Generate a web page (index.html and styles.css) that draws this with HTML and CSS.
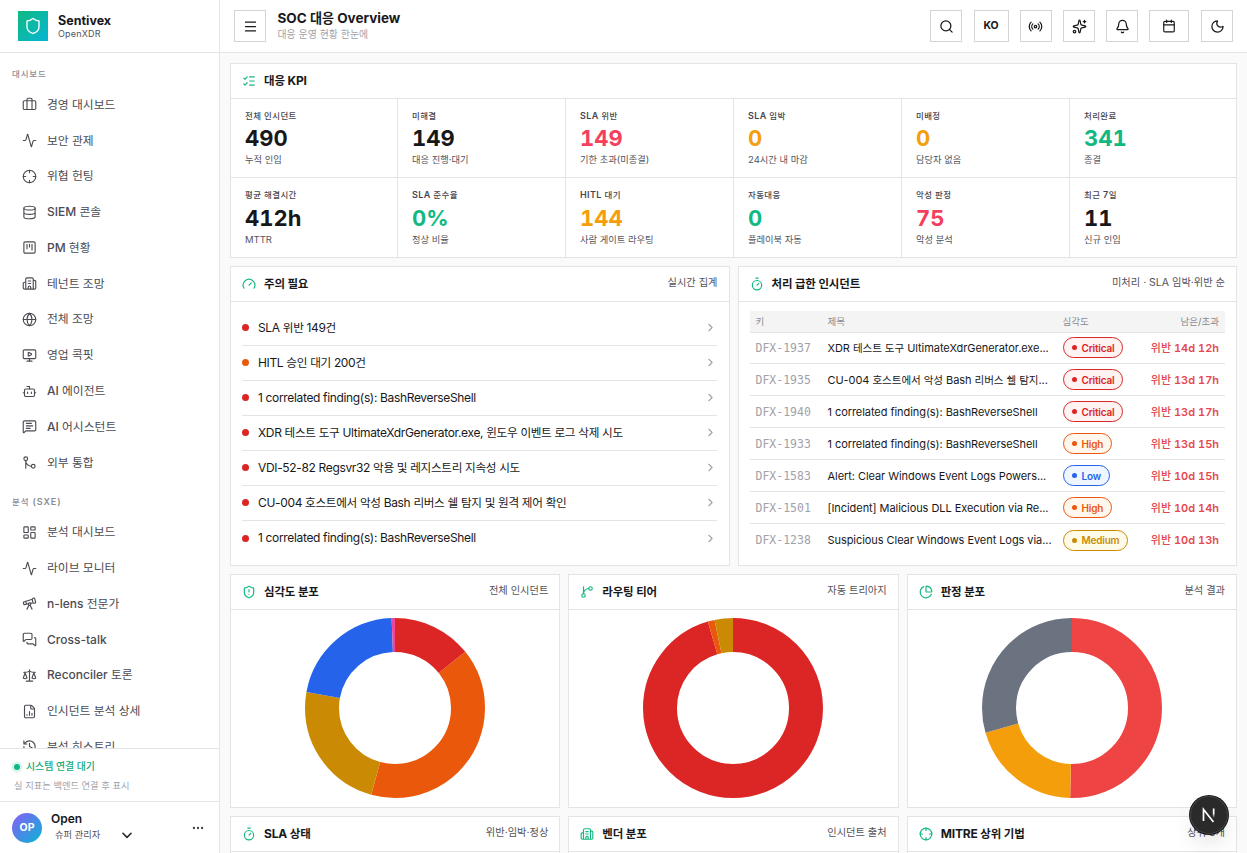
FILE: index.html
```html
<!DOCTYPE html>
<html lang="ko">
<head>
<meta charset="utf-8">
<title>SOC 대응 Overview</title>
<link rel="stylesheet" href="styles.css">
</head>
<body>
<svg class="defs" aria-hidden="true">
  <symbol id="shield" viewBox="0 0 24 24"><path d="M20 13c0 5-3.5 7.5-7.66 8.95a1 1 0 0 1-.67-.01C7.5 20.5 4 18 4 13V6a1 1 0 0 1 1-1c2 0 4.500-1.200 6.240-2.720a1.170 1.170 0 0 1 1.520 0C14.510 3.810 17 5 19 5a1 1 0 0 1 1 1z"/></symbol>
  <symbol id="shield-alert" viewBox="0 0 24 24"><path d="M20 13c0 5-3.5 7.5-7.66 8.950a1 1 0 0 1-.67-.01C7.5 20.5 4 18 4 13V6a1 1 0 0 1 1-1c2 0 4.500-1.200 6.240-2.720a1.170 1.170 0 0 1 1.520 0C14.510 3.810 17 5 19 5a1 1 0 0 1 1 1zM12 8v4M12 16h.01"/></symbol>
  <symbol id="briefcase" viewBox="0 0 24 24"><rect x="2" y="6" width="20" height="14" rx="2"/><path d="M16 20V4a2 2 0 0 0-2-2h-4a2 2 0 0 0-2 2v16"/></symbol>
  <symbol id="activity" viewBox="0 0 24 24"><path d="M22 12h-2.480a2 2 0 0 0-1.930 1.460l-2.350 8.360a.25.25 0 0 1-.48 0L9.240 2.180a.25.25 0 0 0-.48 0l-2.350 8.360A2 2 0 0 1 4.490 12H2"/></symbol>
  <symbol id="crosshair" viewBox="0 0 24 24"><circle cx="12" cy="12" r="10"/><path d="M22 12h-4M6 12H2M12 6V2M12 22v-4"/></symbol>
  <symbol id="database" viewBox="0 0 24 24"><ellipse cx="12" cy="5" rx="9" ry="3"/><path d="M3 5v14a9 3 0 0 0 18 0V5M3 12a9 3 0 0 0 18 0"/></symbol>
  <symbol id="kanban" viewBox="0 0 24 24"><rect x="3" y="3" width="18" height="18" rx="2"/><path d="M8 7v7M12 7v4M16 7v9"/></symbol>
  <symbol id="building" viewBox="0 0 24 24"><path d="M10 12h4M10 8h4M14 21v-3a2 2 0 0 0-4 0v3M6 10H4a2 2 0 0 0-2 2v7a2 2 0 0 0 2 2h16a2 2 0 0 0 2-2V9a2 2 0 0 0-2-2h-2M6 21V5a2 2 0 0 1 2-2h8a2 2 0 0 1 2 2v16"/></symbol>
  <symbol id="globe" viewBox="0 0 24 24"><circle cx="12" cy="12" r="10"/><path d="M12 2a14.500 14.500 0 0 0 0 20 14.500 14.500 0 0 0 0-20M2 12h20"/></symbol>
  <symbol id="monitor" viewBox="0 0 24 24"><path d="M10 7.750a.75.75 0 0 1 1.140-.64l3.670 2.250a.75.75 0 0 1 0 1.280l-3.670 2.250a.75.75 0 0 1-1.140-.64zM12 17v4M8 21h8"/><rect x="2" y="3" width="20" height="14" rx="2"/></symbol>
  <symbol id="bot" viewBox="0 0 24 24"><path d="M12 8V4H8M2 14h2M20 14h2M15 13v2M9 13v2"/><rect x="4" y="8" width="16" height="12" rx="2"/></symbol>
  <symbol id="message" viewBox="0 0 24 24"><path d="M22 17a2 2 0 0 1-2 2H6.828a2 2 0 0 0-1.414.586l-2.202 2.202A.71.71 0 0 1 2 21.286V5a2 2 0 0 1 2-2h16a2 2 0 0 1 2 2zM7 11h10M7 15h6M7 7h8"/></symbol>
  <symbol id="merge" viewBox="0 0 24 24"><circle cx="18" cy="18" r="3"/><circle cx="6" cy="6" r="3"/><path d="M6 21V9a9 9 0 0 0 9 9"/></symbol>
  <symbol id="branch" viewBox="0 0 24 24"><path d="M15 6a9 9 0 0 0-9 9V3"/><circle cx="18" cy="6" r="3"/><circle cx="6" cy="18" r="3"/></symbol>
  <symbol id="dashboard" viewBox="0 0 24 24"><rect x="3" y="3" width="7" height="9" rx="1"/><rect x="14" y="3" width="7" height="5" rx="1"/><rect x="14" y="12" width="7" height="9" rx="1"/><rect x="3" y="16" width="7" height="5" rx="1"/></symbol>
  <symbol id="telescope" viewBox="0 0 24 24"><path d="m10.065 12.493-6.180 1.318a.934.934 0 0 1-1.108-.702l-.537-2.150a1.070 1.070 0 0 1 .691-1.265l13.504-4.440M13.560 11.747l4.332-.924M16 21l-3.105-6.210M16.485 5.940a2 2 0 0 1 1.455-2.425l1.090-.272a1 1 0 0 1 1.212.727l1.515 6.060a1 1 0 0 1-.727 1.213l-1.090.272a2 2 0 0 1-2.425-1.455zM6.158 8.633l1.114 4.456M8 21l3.105-6.210"/><circle cx="12" cy="13" r="2"/></symbol>
  <symbol id="messages" viewBox="0 0 24 24"><path d="M16 10a2 2 0 0 1-2 2H6.828a2 2 0 0 0-1.414.586l-2.202 2.202A.71.71 0 0 1 2 14.286V4a2 2 0 0 1 2-2h10a2 2 0 0 1 2 2zM20 9a2 2 0 0 1 2 2v10.286a.71.71 0 0 1-1.212.502l-2.202-2.202A2 2 0 0 0 17.172 19H10a2 2 0 0 1-2-2v-1"/></symbol>
  <symbol id="scale" viewBox="0 0 24 24"><path d="M12 3v18M19 8l3 8a5 5 0 0 1-6 0zV7M3 7h1a17 17 0 0 0 8-2 17 17 0 0 0 8 2h1M5 8l3 8a5 5 0 0 1-6 0zV7M7 21h10"/></symbol>
  <symbol id="file-chart" viewBox="0 0 24 24"><path d="M6 22a2 2 0 0 1-2-2V4a2 2 0 0 1 2-2h8a2.400 2.400 0 0 1 1.704.706l3.588 3.588A2.400 2.400 0 0 1 20 8v12a2 2 0 0 1-2 2zM14 2v5a1 1 0 0 0 1 1h5M8 18v-1M12 18v-6M16 18v-3"/></symbol>
  <symbol id="history" viewBox="0 0 24 24"><path d="M3 12a9 9 0 1 0 9-9 9.750 9.750 0 0 0-6.740 2.740L3 8M3 3v5h5M12 7v5l4 2"/></symbol>
  <symbol id="checks" viewBox="0 0 24 24"><path d="M13 5h8M13 12h8M13 19h8M3 17l2 2 4-4M3 7l2 2 4-4"/></symbol>
  <symbol id="gauge" viewBox="0 0 24 24"><path d="m12 14 4-4M3.340 19a10 10 0 1 1 17.320 0"/></symbol>
  <symbol id="timer" viewBox="0 0 24 24"><path d="M10 2h4M12 14l3-3"/><circle cx="12" cy="14" r="8"/></symbol>
  <symbol id="pie" viewBox="0 0 24 24"><path d="M21 12c.552 0 1.005-.449.950-.998a10 10 0 0 0-8.953-8.951c-.55-.055-.998.398-.998.950v8a1 1 0 0 0 1 1zM21.210 15.890A10 10 0 1 1 8 2.830"/></symbol>
  <symbol id="menu" viewBox="0 0 24 24"><path d="M4 5h16M4 12h16M4 19h16"/></symbol>
  <symbol id="search" viewBox="0 0 24 24"><path d="m21 21-4.340-4.340"/><circle cx="11" cy="11" r="8"/></symbol>
  <symbol id="radio" viewBox="0 0 24 24"><path d="M16.247 7.761a6 6 0 0 1 0 8.478M19.075 4.933a10 10 0 0 1 0 14.134M4.925 19.067a10 10 0 0 1 0-14.134M7.753 16.239a6 6 0 0 1 0-8.478"/><circle cx="12" cy="12" r="2"/></symbol>
  <symbol id="sparkles" viewBox="0 0 24 24"><path d="M11.017 2.814a1 1 0 0 1 1.966 0l1.051 5.558a2 2 0 0 0 1.594 1.594l5.558 1.051a1 1 0 0 1 0 1.966l-5.558 1.051a2 2 0 0 0-1.594 1.594l-1.051 5.558a1 1 0 0 1-1.966 0l-1.051-5.558a2 2 0 0 0-1.594-1.594l-5.558-1.051a1 1 0 0 1 0-1.966l5.558-1.051a2 2 0 0 0 1.594-1.594zM20 2v4M22 4h-4"/><circle cx="4" cy="20" r="2"/></symbol>
  <symbol id="bell" viewBox="0 0 24 24"><path d="M10.268 21a2 2 0 0 0 3.464 0M3.262 15.326A1 1 0 0 0 4 17h16a1 1 0 0 0 .74-1.673C19.410 13.956 18 12.499 18 8A6 6 0 0 0 6 8c0 4.499-1.411 5.956-2.738 7.326"/></symbol>
  <symbol id="calendar" viewBox="0 0 24 24"><path d="M8 2v4M16 2v4M3 10h18"/><rect x="3" y="4" width="18" height="18" rx="2"/></symbol>
  <symbol id="moon" viewBox="0 0 24 24"><path d="M20.985 12.486a9 9 0 1 1-9.473-9.472c.405-.022.617.460.402.803a6 6 0 0 0 8.268 8.268c.344-.215.825-.004.803.401"/></symbol>
  <symbol id="chev-right" viewBox="0 0 24 24"><path d="m9 18 6-6-6-6"/></symbol>
  <symbol id="chev-down" viewBox="0 0 24 24"><path d="m5 9 7 7 7-7"/></symbol>
  <symbol id="dots" viewBox="0 0 24 24"><circle cx="5" cy="12" r="1"/><circle cx="12" cy="12" r="1"/><circle cx="19" cy="12" r="1"/></symbol>
</svg>

<div class="app">
  <aside class="sidebar">
    <div class="brand">
      <div class="logo"><svg class="icon"><use href="#shield"/></svg></div>
      <div><div class="brand-name">Sentivex</div><div class="brand-sub">OpenXDR</div></div>
    </div>
    <nav class="nav">
      <div class="nav-label">대시보드</div>
      <a class="nav-item"><svg class="icon"><use href="#briefcase"/></svg><span>경영 대시보드</span></a>
      <a class="nav-item"><svg class="icon"><use href="#activity"/></svg><span>보안 관제</span></a>
      <a class="nav-item"><svg class="icon"><use href="#crosshair"/></svg><span>위협 헌팅</span></a>
      <a class="nav-item"><svg class="icon"><use href="#database"/></svg><span>SIEM 콘솔</span></a>
      <a class="nav-item"><svg class="icon"><use href="#kanban"/></svg><span>PM 현황</span></a>
      <a class="nav-item"><svg class="icon"><use href="#building"/></svg><span>테넌트 조망</span></a>
      <a class="nav-item"><svg class="icon"><use href="#globe"/></svg><span>전체 조망</span></a>
      <a class="nav-item"><svg class="icon"><use href="#monitor"/></svg><span>영업 콕핏</span></a>
      <a class="nav-item"><svg class="icon"><use href="#bot"/></svg><span>AI 에이전트</span></a>
      <a class="nav-item"><svg class="icon"><use href="#message"/></svg><span>AI 어시스턴트</span></a>
      <a class="nav-item"><svg class="icon"><use href="#merge"/></svg><span>외부 통합</span></a>
      <div class="nav-label second">분석 (SXE)</div>
      <a class="nav-item"><svg class="icon"><use href="#dashboard"/></svg><span>분석 대시보드</span></a>
      <a class="nav-item"><svg class="icon"><use href="#activity"/></svg><span>라이브 모니터</span></a>
      <a class="nav-item"><svg class="icon"><use href="#telescope"/></svg><span>n-lens 전문가</span></a>
      <a class="nav-item"><svg class="icon"><use href="#messages"/></svg><span>Cross-talk</span></a>
      <a class="nav-item"><svg class="icon"><use href="#scale"/></svg><span>Reconciler 토론</span></a>
      <a class="nav-item"><svg class="icon"><use href="#file-chart"/></svg><span>인시던트 분석 상세</span></a>
      <a class="nav-item"><svg class="icon"><use href="#history"/></svg><span>분석 히스토리</span></a>
    </nav>
    <div class="status">
      <div class="status-line"><i class="status-dot"></i><span>시스템 연결 대기</span></div>
      <div class="status-sub">실 지표는 백엔드 연결 후 표시</div>
    </div>
    <div class="user">
      <div class="avatar">OP</div>
      <div class="user-text">
        <div class="user-name">Open</div>
        <div class="user-role"><span>슈퍼 관리자</span><svg class="icon"><use href="#chev-down"/></svg></div>
      </div>
      <svg class="icon more"><use href="#dots"/></svg>
    </div>
  </aside>

  <div class="main">
    <header class="topbar">
      <button class="btn menu-btn"><svg class="icon"><use href="#menu"/></svg></button>
      <div class="titles"><div class="title">SOC 대응 Overview</div><div class="subtitle">대응 운영 현황 한눈에</div></div>
      <div class="actions">
        <button class="btn"><svg class="icon"><use href="#search"/></svg></button>
        <button class="btn lang">KO</button>
        <button class="btn"><svg class="icon"><use href="#radio"/></svg></button>
        <button class="btn"><svg class="icon"><use href="#sparkles"/></svg></button>
        <button class="btn"><svg class="icon"><use href="#bell"/></svg></button>
        <button class="btn wide"><svg class="icon small"><use href="#calendar"/></svg></button>
        <button class="btn"><svg class="icon"><use href="#moon"/></svg></button>
      </div>
    </header>

    <main class="content">
      <section class="card">
        <div class="card-head"><svg class="icon"><use href="#checks"/></svg><h2>대응 KPI</h2></div>
        <div class="kpis">
          <div class="kpi"><div class="k-label">전체 인시던트</div><div class="k-value">490</div><div class="k-sub">누적 인입</div></div>
          <div class="kpi"><div class="k-label">미해결</div><div class="k-value">149</div><div class="k-sub">대응 진행·대기</div></div>
          <div class="kpi"><div class="k-label">SLA 위반</div><div class="k-value rose">149</div><div class="k-sub">기한 초과(미종결)</div></div>
          <div class="kpi"><div class="k-label">SLA 임박</div><div class="k-value amber">0</div><div class="k-sub">24시간 내 마감</div></div>
          <div class="kpi"><div class="k-label">미배정</div><div class="k-value amber">0</div><div class="k-sub">담당자 없음</div></div>
          <div class="kpi"><div class="k-label">처리완료</div><div class="k-value green">341</div><div class="k-sub">종결</div></div>
          <div class="kpi"><div class="k-label">평균 해결시간</div><div class="k-value">412h</div><div class="k-sub">MTTR</div></div>
          <div class="kpi"><div class="k-label">SLA 준수율</div><div class="k-value green">0%</div><div class="k-sub">정상 비율</div></div>
          <div class="kpi"><div class="k-label">HITL 대기</div><div class="k-value amber">144</div><div class="k-sub">사람 게이트 라우팅</div></div>
          <div class="kpi"><div class="k-label">자동대응</div><div class="k-value green">0</div><div class="k-sub">플레이북 자동</div></div>
          <div class="kpi"><div class="k-label">악성 판정</div><div class="k-value rose">75</div><div class="k-sub">악성 분석</div></div>
          <div class="kpi"><div class="k-label">최근 7일</div><div class="k-value">11</div><div class="k-sub">신규 인입</div></div>
        </div>
      </section>

      <div class="two">
        <section class="card">
          <div class="card-head"><svg class="icon"><use href="#gauge"/></svg><h2>주의 필요</h2><span class="note">실시간 집계</span></div>
          <div class="alerts">
            <div class="alert"><i class="dot"></i><span>SLA 위반 149건</span><svg class="icon"><use href="#chev-right"/></svg></div>
            <div class="alert"><i class="dot orange"></i><span>HITL 승인 대기 200건</span><svg class="icon"><use href="#chev-right"/></svg></div>
            <div class="alert"><i class="dot"></i><span>1 correlated finding(s): BashReverseShell</span><svg class="icon"><use href="#chev-right"/></svg></div>
            <div class="alert"><i class="dot"></i><span>XDR 테스트 도구 UltimateXdrGenerator.exe, 윈도우 이벤트 로그 삭제 시도</span><svg class="icon"><use href="#chev-right"/></svg></div>
            <div class="alert"><i class="dot"></i><span>VDI-52-82 Regsvr32 악용 및 레지스트리 지속성 시도</span><svg class="icon"><use href="#chev-right"/></svg></div>
            <div class="alert"><i class="dot"></i><span>CU-004 호스트에서 악성 Bash 리버스 쉘 탐지 및 원격 제어 확인</span><svg class="icon"><use href="#chev-right"/></svg></div>
            <div class="alert"><i class="dot"></i><span>1 correlated finding(s): BashReverseShell</span><svg class="icon"><use href="#chev-right"/></svg></div>
          </div>
        </section>
        <section class="card">
          <div class="card-head"><svg class="icon"><use href="#timer"/></svg><h2>처리 급한 인시던트</h2><span class="note">미처리 · SLA 임박·위반 순</span></div>
          <div class="table">
            <div class="tr th"><span>키</span><span>제목</span><span>심각도</span><span class="right">남은/초과</span></div>
            <div class="tr"><span class="key">DFX-1937</span><span class="subject">XDR 테스트 도구 UltimateXdrGenerator.exe...</span><span class="chip critical"><i></i>Critical</span><span class="due">위반 14d 12h</span></div>
            <div class="tr"><span class="key">DFX-1935</span><span class="subject">CU-004 호스트에서 악성 Bash 리버스 쉘 탐지...</span><span class="chip critical"><i></i>Critical</span><span class="due">위반 13d 17h</span></div>
            <div class="tr"><span class="key">DFX-1940</span><span class="subject">1 correlated finding(s): BashReverseShell</span><span class="chip critical"><i></i>Critical</span><span class="due">위반 13d 17h</span></div>
            <div class="tr"><span class="key">DFX-1933</span><span class="subject">1 correlated finding(s): BashReverseShell</span><span class="chip high"><i></i>High</span><span class="due">위반 13d 15h</span></div>
            <div class="tr"><span class="key">DFX-1583</span><span class="subject">Alert: Clear Windows Event Logs Powers...</span><span class="chip low"><i></i>Low</span><span class="due">위반 10d 15h</span></div>
            <div class="tr"><span class="key">DFX-1501</span><span class="subject">[Incident] Malicious DLL Execution via Re...</span><span class="chip high"><i></i>High</span><span class="due">위반 10d 14h</span></div>
            <div class="tr"><span class="key">DFX-1238</span><span class="subject">Suspicious Clear Windows Event Logs via...</span><span class="chip medium"><i></i>Medium</span><span class="due">위반 10d 13h</span></div>
          </div>
        </section>
      </div>

      <div class="three">
        <section class="card chart-card">
          <div class="card-head"><svg class="icon"><use href="#shield-alert"/></svg><h2>심각도 분포</h2><span class="note">전체 인시던트</span></div>
          <svg class="donut" viewBox="0 0 180 180">
            <circle cx="90" cy="90" r="73" pathLength="360" stroke="#dc2626" stroke-dasharray="51.4 360"/>
            <circle cx="90" cy="90" r="73" pathLength="360" stroke="#ea580c" stroke-dasharray="144 360" stroke-dashoffset="-51.4"/>
            <circle cx="90" cy="90" r="73" pathLength="360" stroke="#ca8a04" stroke-dasharray="84.900 360" stroke-dashoffset="-195.4"/>
            <circle cx="90" cy="90" r="73" pathLength="360" stroke="#2563eb" stroke-dasharray="77.500 360" stroke-dashoffset="-280.3"/>
            <circle cx="90" cy="90" r="73" pathLength="360" stroke="#ec4899" stroke-dasharray="2.2 360" stroke-dashoffset="-357.8"/>
          </svg>
        </section>
        <section class="card chart-card">
          <div class="card-head"><svg class="icon"><use href="#branch"/></svg><h2>라우팅 티어</h2><span class="note">자동 트리아지</span></div>
          <svg class="donut" viewBox="0 0 180 180">
            <circle cx="90" cy="90" r="73" pathLength="360" stroke="#dc2626" stroke-dasharray="343.7 360"/>
            <circle cx="90" cy="90" r="73" pathLength="360" stroke="#ea580c" stroke-dasharray="4.4 360" stroke-dashoffset="-343.7"/>
            <circle cx="90" cy="90" r="73" pathLength="360" stroke="#ca8a04" stroke-dasharray="11.9 360" stroke-dashoffset="-348.1"/>
          </svg>
        </section>
        <section class="card chart-card">
          <div class="card-head"><svg class="icon"><use href="#pie"/></svg><h2>판정 분포</h2><span class="note">분석 결과</span></div>
          <svg class="donut" viewBox="0 0 180 180">
            <circle cx="90" cy="90" r="73" pathLength="360" stroke="#ef4444" stroke-dasharray="181.2 360"/>
            <circle cx="90" cy="90" r="73" pathLength="360" stroke="#f59e0b" stroke-dasharray="72.700 360" stroke-dashoffset="-181.2"/>
            <circle cx="90" cy="90" r="73" pathLength="360" stroke="#6b7280" stroke-dasharray="106.1 360" stroke-dashoffset="-253.9"/>
          </svg>
        </section>
        <section class="card chart-card">
          <div class="card-head"><svg class="icon"><use href="#timer"/></svg><h2>SLA 상태</h2><span class="note">위반·임박·정상</span></div>
        </section>
        <section class="card chart-card">
          <div class="card-head"><svg class="icon"><use href="#building"/></svg><h2>벤더 분포</h2><span class="note">인시던트 출처</span></div>
        </section>
        <section class="card chart-card">
          <div class="card-head"><svg class="icon"><use href="#crosshair"/></svg><h2>MITRE 상위 기법</h2><span class="note">상위 8개</span></div>
        </section>
      </div>
    </main>
  </div>
</div>
<div class="dev-badge">
  <svg viewBox="0 0 38 38"><defs><linearGradient id="fade" x1="0" y1="0" x2="0" y2="1"><stop offset="0.5" stop-color="#fff"/><stop offset="1" stop-color="#fff" stop-opacity="0"/></linearGradient></defs><path d="M13.500 25V13.500L23.500 26" fill="none" stroke="#fff" stroke-width="1.700"/><rect x="22.800" y="12.500" width="1.700" height="9.500" fill="url(#fade)"/></svg>
</div>
<script src="hangul.js"></script>
</body>
</html>
```
FILE: hangul.js
```js
// Wraps Hangul runs so they can be sized optically against the Latin face.
const walker = document.createTreeWalker(document.querySelector('.app'), NodeFilter.SHOW_TEXT);
const nodes = [];
while (walker.nextNode()) {
  if (/[가-힣]/.test(walker.currentNode.data)) nodes.push(walker.currentNode);
}
for (const node of nodes) {
  const fragment = document.createDocumentFragment();
  for (const part of node.data.split(/([가-힣]+)/)) {
    if (!part) continue;
    if (/[가-힣]/.test(part)) {
      const span = document.createElement('span');
      span.className = 'ko';
      span.textContent = part;
      fragment.append(span);
    } else {
      fragment.append(part);
    }
  }
  node.replaceWith(fragment);
}
```
FILE: styles.css
```css
* { box-sizing: border-box; }
html, body { height: 100%; }
body {
  margin: 0;
  overflow: hidden;
  background: #fafafa;
  color: #18181b;
  font-family: Inter, "Noto Sans CJK KR", sans-serif;
  font-size: 12px;
  line-height: 16px;
}
.defs { display: none; }
.ko { font-size: .94em; line-height: 0; }
.icon {
  width: 15px;
  height: 15px;
  flex: none;
  fill: none;
  stroke: currentColor;
  stroke-width: 2;
  stroke-linecap: round;
  stroke-linejoin: round;
}
.app { display: grid; grid-template-columns: 220px 1fr; height: 853px; }

/* Sidebar */
.sidebar {
  display: flex;
  flex-direction: column;
  height: 853px;
  background: #fff;
  border-right: 1px solid #e4e4e7;
}
.brand {
  display: flex;
  align-items: center;
  gap: 10px;
  flex: none;
  height: 53px;
  padding: 0 18px;
  border-bottom: 1px solid #e4e4e7;
}
.logo {
  display: grid;
  place-items: center;
  width: 30px;
  height: 30px;
  background: linear-gradient(135deg, #10b981, #06b6d4);
  color: #fff;
}
.logo .icon { width: 18px; height: 18px; stroke-width: 1.8; }
.brand-name { font-size: 12.500px; font-weight: 700; line-height: 15px; }
.brand-sub { color: #52525b; font-size: 9px; line-height: 11px; letter-spacing: .2px; }
.nav { flex: 1; min-height: 0; overflow: hidden; padding: 13px 12px 0; }
.nav-label {
  height: 17px;
  margin-bottom: 4px;
  color: #8b8b93;
  font-size: 9px;
  font-weight: 600;
  letter-spacing: .9px;
}
.nav-label .ko { font-weight: 500; }
.nav-label.second { margin-top: 14px; margin-bottom: 3px; }
.nav-item {
  display: flex;
  align-items: center;
  gap: 10px;
  height: 35.770px;
  padding: 0 10px;
  color: #4b4b53;
  font-weight: 500;
}
.nav-item .ko { font-size: .985em; font-weight: 400; }
.nav-item .icon { stroke-width: 1.800; }
.status { flex: none; height: 53px; padding: 10px 14px 0; border-top: 1px solid #e4e4e7; }
.status-line { display: flex; align-items: center; gap: 6px; color: #10a878; font-size: 10.500px; font-weight: 600; }
.status-line .ko { font-weight: 500; }
.status-dot { width: 6px; height: 6px; border-radius: 50%; background: #10b981; box-shadow: 0 0 0 2.500px #10b98126; }
.status-sub { margin-top: 3px; color: #a1a1aa; font-size: 9.500px; }
.status-sub .ko, .user-role .ko, .k-sub .ko, .note .ko { font-size: .975em; }
.user { display: flex; align-items: center; flex: none; height: 52px; padding: 0 14px 0 12px; border-top: 1px solid #e4e4e7; }
.avatar {
  display: grid;
  place-items: center;
  width: 30px;
  height: 30px;
  border-radius: 50%;
  background: linear-gradient(135deg, #8b5cf6, #06b6d4);
  color: #fff;
  font-size: 10.500px;
  font-weight: 700;
}
.user-text { flex: 1; margin-left: 9px; padding-bottom: 1px; }
.user-name { font-weight: 600; }
.user-role { display: flex; align-items: center; justify-content: space-between; width: 83px; padding-left: 4px; color: #52525b; font-size: 9.500px; }
.user-role .icon { width: 14px; height: 14px; color: #27272a; stroke-width: 2.700; }
.more { width: 14px; height: 14px; color: #3f3f46; }

/* Top bar */
.main { min-width: 0; height: 853px; overflow: hidden; }
.topbar {
  display: flex;
  align-items: center;
  height: 53px;
  padding: 0 14px;
  background: #fff;
  border-bottom: 1px solid #e4e4e7;
}
.btn {
  display: grid;
  place-items: center;
  width: 32px;
  height: 32px;
  padding: 0;
  border: 1px solid #d4d4d8;
  background: #fff;
  color: #18181b;
  font: inherit;
}
.btn.lang { width: 35px; font-size: 10.500px; font-weight: 700; }
.btn.wide { width: 40px; margin: 0 1px 0 -1px; }
.btn .small { width: 14px; height: 14px; }
.titles { margin-left: 11.500px; }
.title { font-size: 13.500px; font-weight: 700; line-height: 17px; }
.title .ko { font-size: .97em; }
.subtitle { color: #a1a1aa; font-size: 10.500px; line-height: 15px; }
.actions { display: flex; gap: 11.300px; margin-left: auto; }

/* Cards */
.content { display: flex; flex-direction: column; gap: 8px; padding: 10px 10px 0; }
.card { min-width: 0; background: #fff; border: 1px solid #e4e4e7; }
.card-head {
  display: flex;
  align-items: center;
  height: 35px;
  padding: 0 11px;
  border-bottom: 1px solid #e4e4e7;
}
.card-head .icon { width: 14px; height: 14px; color: #10b981; }
.card-head h2 { margin: 0 0 0 8px; font-size: 12px; font-weight: 700; line-height: 16px; letter-spacing: -.15px; }
.card-head h2 .ko { font-size: .955em; }
.note { margin-left: auto; padding-bottom: 2px; color: #52525b; font-size: 10.500px; }
.kpis { display: grid; grid-template-columns: 167px repeat(5, 168px); grid-template-rows: 78px 80px; overflow: hidden; }
.kpi { padding: 9px 14px 0; border-right: 1px solid #e4e4e7; }
.kpi:nth-child(n+7) { border-top: 1px solid #e4e4e7; }
.kpi:nth-child(6n) { border-right: 0; }
.k-label { color: #46464e; font-size: 9px; font-weight: 600; letter-spacing: .4px; }
.k-label .ko { font-weight: 500; }
.k-value { margin-top: 1px; font-size: 22px; font-weight: 700; line-height: 27px; font-variant-numeric: tabular-nums; }
.kpi:nth-child(n+7) .k-value { margin-top: 2px; }
.k-sub { color: #52525b; font-size: 9.500px; line-height: 16px; }
.rose { color: #f43f5e; }
.amber { color: #f59e0b; }
.green { color: #10b981; }
.two { display: grid; grid-template-columns: 1fr 1fr; gap: 8px; height: 300px; }
.alerts { padding: 8.500px 12px 0 11px; }
.alert { display: flex; align-items: center; height: 35px; border-bottom: 1px solid #e4e4e7; letter-spacing: -.34px; }
.alert .ko { font-size: .97em; }
.alert:last-child { border-bottom: 0; }
.alert .icon { width: 13px; height: 13px; margin-left: auto; color: #a1a1aa; }
.dot { width: 7px; height: 7px; margin-right: 9px; border-radius: 50%; background: #dc2626; }
.dot.orange { background: #ea580c; }

/* Incident table */
.table { padding: 9px 11px 0; }
.tr {
  display: grid;
  grid-template-columns: 72px 235px 78px 1fr;
  align-items: center;
  height: 32px;
  padding: 0 6px;
  border-bottom: 1px solid #e4e4e7;
  font-size: 11px;
}
.tr:last-child { border-bottom: 0; }
.th { height: 22px; margin-bottom: -1px; background: #f4f4f5; color: #8b8b93; font-size: 9.500px; font-weight: 500; }
.th .ko { font-size: 1em; font-weight: 400; }
.key { color: #a1a1aa; font-family: "DejaVu Sans Mono", monospace; font-size: 11.500px; }
.subject { letter-spacing: -.06px; white-space: nowrap; }
.subject .ko { font-size: .96em; }
.right, .due { text-align: right; }
.due { color: #e5484d; font-weight: 600; font-variant-numeric: tabular-nums; white-space: nowrap; }
.due .ko { font-size: 1em; font-weight: 500; }
.chip {
  display: flex;
  align-items: center;
  justify-self: start;
  gap: 5px;
  height: 21px;
  padding: 0 8px;
  border: 1px solid;
  border-radius: 11px;
  font-size: 10px;
  font-weight: 600;
  letter-spacing: -.2px;
}
.chip i { width: 5px; height: 5px; border-radius: 50%; background: currentColor; }
.critical { background: #fef2f2; color: #dc2626; }
.high { background: #fff7ed; color: #ea580c; }
.medium { background: #fefce8; color: #ca8a04; }
.low { background: #eff6ff; color: #2563eb; }

/* Charts */
.three { display: grid; grid-template-columns: repeat(3, 1fr); grid-auto-rows: 234px; gap: 8px; }
.donut { display: block; width: 180px; height: 180px; margin: 8px auto 0; transform: rotate(-90deg); fill: none; stroke-width: 34; }

.dev-badge {
  position: fixed;
  right: 19px;
  bottom: 19px;
  width: 38px;
  height: 38px;
  border-radius: 50%;
  background: #2a2a2a;
  box-shadow: inset 0 0 0 1px #444, 0 0 0 1px #171717, 0 12px 24px -6px #0000002e;
}
```
